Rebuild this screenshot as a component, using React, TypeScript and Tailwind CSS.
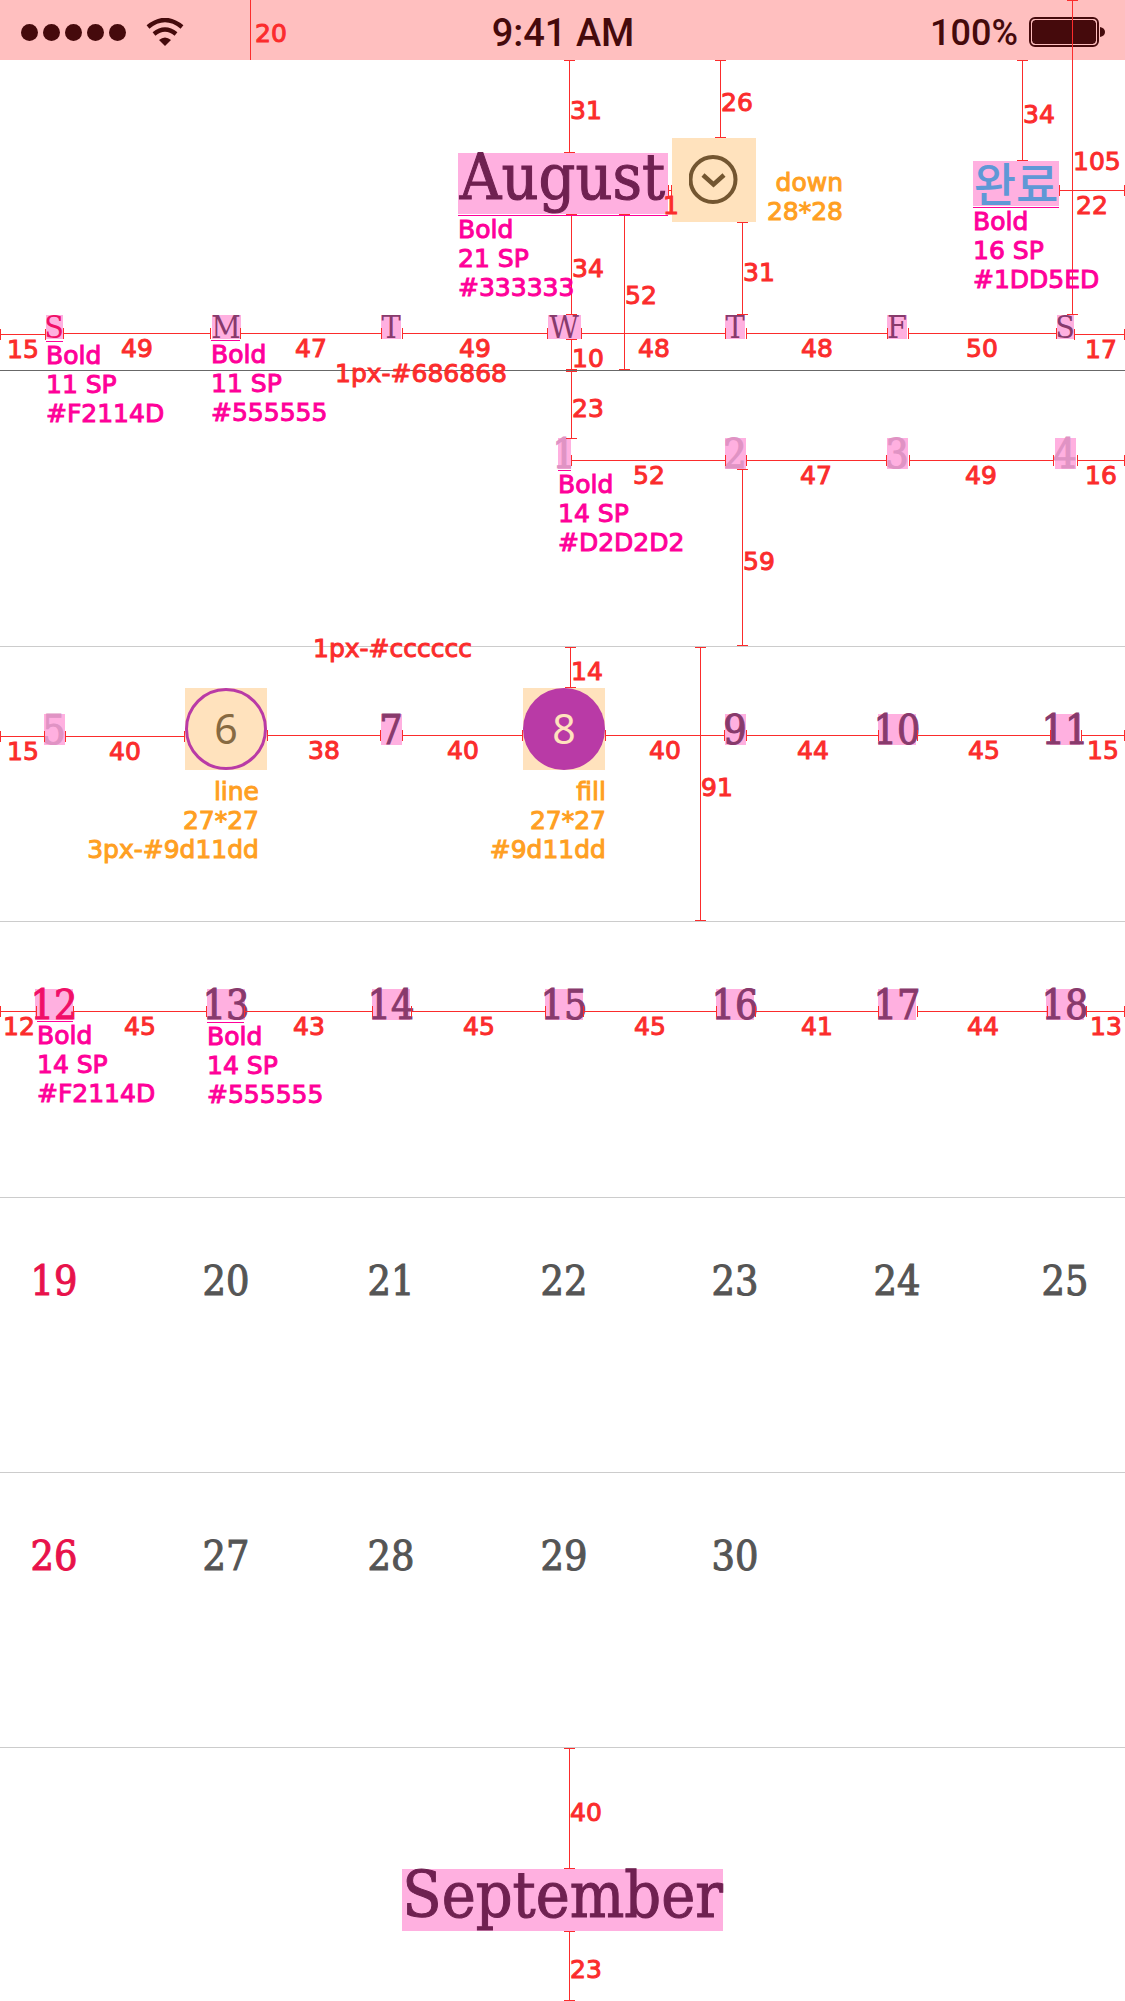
import React from "react";

const FRAME_WIDTH = 1125;
const pct = (x: number) => `${(x / FRAME_WIDTH) * 100}%`;

type Tone = "faint" | "normal" | "sunday";
type Day = { n: number; tone: Tone; mark?: string; ring?: "line" | "fill" };

const TONE_PLAIN: Record<Tone, string> = {
  faint: "text-[#d2d2d2]",
  normal: "text-[#555555]",
  sunday: "text-[#e8124b]",
};
const TONE_MARKED: Record<Tone, string> = {
  faint: "bg-[#ffb0e0] text-[#e093c4]",
  normal: "bg-[#ffb0e0] text-[#883a6c]",
  sunday: "bg-[#ffb0e0] text-[#f00f67]",
};

const COLUMNS = [
  "w-[14.58%]",
  "w-[14.58%]",
  "w-[13.39%]",
  "w-[15.93%]",
  "w-[13.05%]",
  "w-[14.41%]",
  "w-[14.06%]",
];

const WEEKDAYS = [
  { name: "Sunday", letter: "S", width: "w-[17px]" },
  { name: "Monday", letter: "M", width: "w-[29px]" },
  { name: "Tuesday", letter: "T", width: "w-[20px]" },
  { name: "Wednesday", letter: "W", width: "w-[33px]" },
  { name: "Thursday", letter: "T", width: "w-[20px]" },
  { name: "Friday", letter: "F", width: "w-[20px]" },
  { name: "Saturday", letter: "S", width: "w-[17px]" },
];

const N = "w-[21px]";
const W = "w-[38px]";

const WEEKS: (Day | null)[][] = [
  [
    null,
    null,
    null,
    { n: 1, tone: "faint", mark: "w-[13px]" },
    { n: 2, tone: "faint", mark: N },
    { n: 3, tone: "faint", mark: N },
    { n: 4, tone: "faint", mark: N },
  ],
  [
    { n: 5, tone: "faint", mark: N },
    { n: 6, tone: "normal", ring: "line" },
    { n: 7, tone: "normal", mark: N },
    { n: 8, tone: "normal", ring: "fill" },
    { n: 9, tone: "normal", mark: N },
    { n: 10, tone: "normal", mark: W },
    { n: 11, tone: "normal", mark: "w-[30px]" },
  ],
  [
    { n: 12, tone: "sunday", mark: W },
    { n: 13, tone: "normal", mark: W },
    { n: 14, tone: "normal", mark: W },
    { n: 15, tone: "normal", mark: W },
    { n: 16, tone: "normal", mark: W },
    { n: 17, tone: "normal", mark: W },
    { n: 18, tone: "normal", mark: W },
  ],
  [19, 20, 21, 22, 23, 24, 25].map((n): Day => ({ n, tone: n === 19 ? "sunday" : "normal" })),
  [26, 27, 28, 29, 30, 0, 0].map((n): Day | null =>
    n ? { n, tone: n === 26 ? "sunday" : "normal" } : null
  ),
];

// Horizontal measures: [y, from, to]
const H_RULES: [number, number, number][] = [
  [190, 1059, 1125],
  [190, 668, 672],
  [334, 0, 46],
  [333, 63, 211],
  [333, 240, 382],
  [333, 402, 548],
  [333, 581, 726],
  [333, 746, 888],
  [333, 908, 1057],
  [334, 1074, 1125],
  [460, 571, 726],
  [460, 746, 887],
  [460, 909, 1054],
  [460, 1077, 1125],
  [736, 0, 45],
  [736, 65, 185],
  [735, 267, 381],
  [735, 402, 523],
  [735, 605, 725],
  [735, 746, 879],
  [735, 917, 1051],
  [735, 1081, 1125],
  [1011, 0, 37],
  [1011, 73, 207],
  [1011, 244, 373],
  [1011, 411, 546],
  [1011, 583, 717],
  [1011, 755, 879],
  [1011, 917, 1048],
  [1011, 1086, 1125],
];

// Vertical measures: [x, from, to]
const V_RULES: [number, number, number][] = [
  [569, 60, 153],
  [720, 60, 138],
  [1022, 60, 161],
  [1072, 0, 315],
  [571, 214, 315],
  [624, 214, 370],
  [742, 222, 315],
  [571, 339, 370],
  [571, 371, 439],
  [742, 469, 646],
  [570, 647, 688],
  [700, 647, 921],
  [569, 1748, 1869],
  [569, 1931, 2001],
];

// Measure captions: [text, left, baseline]
const CAPTIONS: [string, number, number][] = [
  ["20", 255, 43],
  ["31", 570, 120],
  ["26", 721, 112],
  ["34", 1023, 124],
  ["105", 1073, 171],
  ["22", 1076, 215],
  ["1", 663, 215],
  ["34", 572, 278],
  ["52", 625, 305],
  ["31", 743, 282],
  ["10", 572, 368],
  ["23", 572, 418],
  ["15", 7, 359],
  ["49", 121, 358],
  ["47", 295, 358],
  ["49", 459, 358],
  ["48", 638, 358],
  ["48", 801, 358],
  ["50", 966, 358],
  ["17", 1085, 359],
  ["1px-#686868", 335, 383],
  ["52", 633, 485],
  ["47", 800, 485],
  ["49", 965, 485],
  ["16", 1085, 485],
  ["59", 743, 571],
  ["1px-#cccccc", 313, 658],
  ["14", 571, 681],
  ["91", 701, 797],
  ["15", 7, 761],
  ["40", 109, 761],
  ["38", 308, 760],
  ["40", 447, 760],
  ["40", 649, 760],
  ["44", 797, 760],
  ["45", 968, 760],
  ["15", 1087, 760],
  ["12", 3, 1036],
  ["45", 124, 1036],
  ["43", 293, 1036],
  ["45", 463, 1036],
  ["45", 634, 1036],
  ["41", 801, 1036],
  ["44", 967, 1036],
  ["13", 1090, 1036],
  ["40", 570, 1822],
  ["23", 570, 1979],
];

// Type notes: left edge, underline top, underline width, lines
const TYPE_NOTES: [number, number, number, string[]][] = [
  [458, 215, 210, ["Bold", "21 SP", "#333333"]],
  [973, 207, 86, ["Bold", "16 SP", "#1DD5ED"]],
  [46, 341, 17, ["Bold", "11 SP", "#F2114D"]],
  [211, 340, 29, ["Bold", "11 SP", "#555555"]],
  [558, 470, 13, ["Bold", "14 SP", "#D2D2D2"]],
  [37, 1021, 36, ["Bold", "14 SP", "#F2114D"]],
  [207, 1022, 37, ["Bold", "14 SP", "#555555"]],
];

// Asset notes: right edge, top, lines
const ASSET_NOTES: [number, number, string[]][] = [
  [843, 168, ["down", "28*28"]],
  [259, 777, ["line", "27*27", "3px-#9d11dd"]],
  [606, 777, ["fill", "27*27", "#9d11dd"]],
];

const NOTE_TEXT =
  "font-['DejaVu_Sans',sans-serif] text-[25px] leading-[29px] whitespace-nowrap [-webkit-text-stroke:1px]";

function Redlines() {
  return (
    <div className="pointer-events-none absolute inset-0 overflow-hidden">
      {H_RULES.map(([y, from, to], i) => (
        <div
          key={`h${i}`}
          className="absolute flex h-[11px] items-center border-x border-[#fb2c2c]"
          style={{ top: y - 5, left: pct(from), width: pct(to - from) }}
        >
          <span className="h-px w-full bg-[#fb2c2c]" />
        </div>
      ))}
      {V_RULES.map(([x, from, to], i) => (
        <div
          key={`v${i}`}
          className="absolute -ml-[5px] flex w-[11px] justify-center border-y border-[#fb2c2c]"
          style={{ left: pct(x), top: from, height: to - from }}
        >
          <span className="w-px bg-[#fb2c2c]" />
        </div>
      ))}
      <div className="absolute top-0 h-15 w-px bg-[#fb2c2c]" style={{ left: pct(250) }} />
      {CAPTIONS.map(([text, x, baseline], i) => (
        <span
          key={`c${i}`}
          className={`absolute text-[#fb2c2c] ${NOTE_TEXT}`}
          style={{ left: pct(x), top: baseline - 24 }}
        >
          {text}
        </span>
      ))}
      {TYPE_NOTES.map(([x, y, width, lines], i) => (
        <div
          key={`t${i}`}
          className={`absolute text-[#ff0099] ${NOTE_TEXT}`}
          style={{ left: pct(x), top: y }}
        >
          <div className="-mb-px h-px bg-[#ff0099]" style={{ width }} />
          {lines.map((line) => (
            <p key={line}>{line}</p>
          ))}
        </div>
      ))}
      {ASSET_NOTES.map(([right, y, lines], i) => (
        <div
          key={`a${i}`}
          className={`absolute text-right text-[#ff9f22] ${NOTE_TEXT}`}
          style={{ right: pct(FRAME_WIDTH - right), top: y }}
        >
          {lines.map((line) => (
            <p key={line}>{line}</p>
          ))}
        </div>
      ))}
    </div>
  );
}

function StatusBar() {
  return (
    <div className="grid h-15 grid-cols-[1fr_auto_1fr] items-center bg-[#ffbfbf] pr-5 pl-[21px] font-['Roboto',sans-serif] font-medium text-[#450a0c]">
      <div className="flex items-center pt-1">
        <div className="flex gap-[5px]">
          {[0, 1, 2, 3, 4].map((i) => (
            <span key={i} className="size-[17px] rounded-full bg-[#450a0c]" />
          ))}
        </div>
        <svg className="ml-5 h-7 w-[38px]" viewBox="0 0 38 28" fill="none" aria-hidden="true">
          <path d="M2 9 Q19 -5 36 9" stroke="#450a0c" strokeWidth="4.4" />
          <path d="M8 16 Q19 7 30 16" stroke="#450a0c" strokeWidth="4.4" />
          <path d="M13 22 Q19 17 25 22 L19 28 Z" fill="#450a0c" />
        </svg>
      </div>
      <span className="pt-1.5 text-[38px] leading-none">9:41 AM</span>
      <div className="flex items-center justify-end gap-[11px] pt-1">
        <span className="pt-0.5 text-[36px] leading-none">100%</span>
        <svg className="h-[30px] w-[76px]" viewBox="0 0 76 30" aria-hidden="true">
          <rect x="1" y="1" width="68" height="28" rx="5" fill="none" stroke="#450a0c" strokeWidth="2" />
          <rect x="3" y="3" width="64" height="24" rx="3" fill="#450a0c" />
          <rect x="2.500" y="2.500" width="65" height="25" rx="4" fill="none" stroke="#ffbfbf" strokeWidth="1" />
          <path d="M71 10 Q76 11 76 15 Q76 19 71 20 Z" fill="#450a0c" />
        </svg>
      </div>
    </div>
  );
}

function DayButton({ day }: { day: Day }) {
  if (day.ring) {
    const ring =
      day.ring === "fill"
        ? "bg-[#b93aa6] text-[#ffe2bd]"
        : "border-3 border-[#b93aa6] text-[#876a42]";
    return (
      <button type="button" className="-mt-[26px] block size-[82px] bg-[#ffe2bd]">
        <span
          className={`flex size-full items-center justify-center rounded-full font-['Noto_Sans',sans-serif] text-[41px] ${ring}`}
        >
          {day.n}
        </span>
      </button>
    );
  }
  const look = day.mark ? `${day.mark} ${TONE_MARKED[day.tone]}` : TONE_PLAIN[day.tone];
  return (
    <button
      type="button"
      className={`flex h-[31px] justify-center text-[41px] leading-[33px] whitespace-nowrap [-webkit-text-stroke:1px] ${look}`}
    >
      {day.n}
    </button>
  );
}

export default function App() {
  return (
    <div className="relative overflow-hidden bg-white font-['DejaVu_Serif_Condensed','DejaVu_Serif',serif] font-normal">
      <StatusBar />

      <header className="grid h-[251px] grid-cols-[1fr_auto_1fr] items-start gap-1">
        <span />
        <h1 className="mt-[93px] flex h-[61px] w-[210px] justify-center bg-[#ffb0e0] text-[64px] leading-[48px] text-[#6f2151] [-webkit-text-stroke:1px]">
          August
        </h1>
        <div className="flex items-start justify-between pt-[78px] pr-[66px]">
          <button
            type="button"
            aria-label="Choose month"
            className="flex size-[84px] items-center justify-center bg-[#ffe2bd]"
          >
            <svg className="size-[50px]" viewBox="0 0 50 50" fill="none" stroke="#735631" strokeWidth="4" aria-hidden="true">
              <circle cx="24" cy="24.500" r="22.500" />
              <path d="M14 20 L24.500 29.500 L35 20" strokeWidth="4.500" />
            </svg>
          </button>
          <button
            type="button"
            className="mt-[23px] flex h-[45px] w-[86px] justify-center bg-[#ffb0e0] font-['Noto_Sans_CJK_KR',sans-serif] text-[46px] leading-[41px] font-medium whitespace-nowrap text-[#5f98d6]"
          >
            완료
          </button>
        </div>
      </header>

      <table className="-ml-8 w-[calc(100%+55px)] table-fixed border-separate border-spacing-0">
        <colgroup>
          {COLUMNS.map((width, i) => (
            <col key={i} className={width} />
          ))}
        </colgroup>
        <thead>
          <tr>
            {WEEKDAYS.map((day, i) => (
              <th
                key={day.name}
                scope="col"
                abbr={day.name}
                className="h-15 border-b border-[#686868] pt-1 align-top font-normal"
              >
                <span
                  className={`mx-auto flex h-6 justify-center text-[32px] leading-6 ${day.width} ${TONE_MARKED[i === 0 ? "sunday" : "normal"]}`}
                >
                  {day.letter}
                </span>
              </th>
            ))}
          </tr>
        </thead>
        <tbody>
          {WEEKS.map((week, row) => (
            <tr key={row}>
              {week.map((day, col) => (
                <td
                  key={col}
                  className={`border-b border-[#cccccc] pt-[67px] align-top ${row === 0 || row === 2 ? "h-[276px]" : "h-[275px]"}`}
                >
                  {day && (
                    <div className="flex justify-center">
                      <DayButton day={day} />
                    </div>
                  )}
                </td>
              ))}
            </tr>
          ))}
        </tbody>
      </table>

      <section className="flex justify-center pt-[121px] pb-[70px]">
        <h2 className="flex h-[62px] w-[321px] justify-center bg-[#ffb0e0] text-[64px] leading-[52px] text-[#6f2151] [-webkit-text-stroke:1px]">
          September
        </h2>
      </section>

      <Redlines />
    </div>
  );
}
